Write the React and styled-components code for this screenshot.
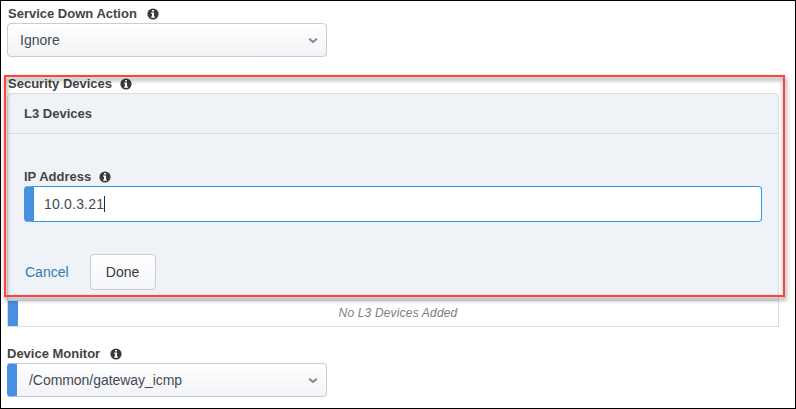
import React from "react";
import styled, { createGlobalStyle } from "styled-components";

const GlobalStyle = createGlobalStyle`
  *, *::before, *::after { box-sizing: border-box; }
  body {
    margin: 0;
    background: #fff;
    font-family: "Liberation Sans", Arial, sans-serif;
    font-size: 14px;
    color: #434a54;
  }
`;

const Page = styled.main`
  position: relative;
  width: 796px;
  height: 409px;
  padding: 4px 16px 0 6px;
  border: 1px solid #000;
  overflow: hidden;
`;

const Field = styled.section`
  display: flex;
  flex-direction: column;
  height: ${(p) => p.$height}px;
`;

const Label = styled.label`
  display: flex;
  align-items: center;
  flex: none;
  height: 18px;
  padding-left: ${(p) => p.$indent || 0}px;
  font-size: 13px;
  line-height: 18px;
  font-weight: 700;
  color: #444;
  white-space: nowrap;
`;

const LabelText = styled.span`
  width: ${(p) => p.$width}px;
`;

const IconSvg = styled.svg`
  flex: none;
  width: 12px;
  height: 12px;
  margin: 0 0 1px 9px;
`;

const Select = styled.div`
  display: flex;
  align-items: center;
  justify-content: space-between;
  width: 320px;
  height: 34px;
  padding: 0 8px 0 12px;
  border: 1px solid #c9cbd6;
  border-radius: 4px;
  background: linear-gradient(#fff, #f2f3f6);
  ${(p) => p.$required && "border-left: 10px solid #4a90e2; letter-spacing: -0.05px;"}
`;

const Chevron = styled.svg`
  width: 10px;
  height: 7px;
`;

const Panel = styled.div`
  width: 772px;
  height: 208px;
  border: 1px solid #d9dde2;
  border-radius: 4px 4px 0 0;
  background: #eff3f8;
`;

const PanelHeader = styled.header`
  height: 40px;
  padding-left: 16px;
  border-bottom: 1px solid #d9dde2;
  font-size: 13px;
  line-height: 39px;
  font-weight: 700;
  color: #444;
`;

const PanelBody = styled.div`
  padding: 34px 16px 0;
`;

const TextInput = styled.div`
  display: flex;
  align-items: center;
  height: 36px;
  padding-left: 10px;
  border: 1px solid #2b9af3;
  border-left: 10px solid #4a90e2;
  border-radius: 4px;
  background: #fff;
  letter-spacing: 0.2px;
`;

const Caret = styled.span`
  width: 1px;
  height: 16px;
  background: #1d2b40;
`;

const Actions = styled.div`
  display: flex;
  align-items: center;
  gap: 21px;
  margin-top: 32px;
`;

const CancelLink = styled.a`
  padding-left: 1px;
  color: #337ab7;
`;

const DoneButton = styled.button`
  width: 66px;
  height: 36px;
  padding: 0;
  border: 1px solid #c9cbd6;
  border-radius: 4px;
  background: linear-gradient(#fff, #f5f6f9);
  color: #343a44;
  font: inherit;
`;

const EmptyRow = styled.div`
  width: 772px;
  height: 26px;
  padding-left: 10px;
  border: 1px solid #dcdcdf;
  border-top: 0;
  background: linear-gradient(90deg, #4a90e2 10px, #fff 10px);
  font-size: 12px;
  line-height: 24px;
  font-style: italic;
  letter-spacing: 0.17px;
  text-align: center;
  color: #808080;
`;

const Highlight = styled.div`
  position: absolute;
  left: 3px;
  top: 74px;
  width: 781px;
  height: 222px;
  border: 2px solid #ff4343;
  filter: drop-shadow(1px 3px 2px rgba(0, 0, 0, 0.5));
  pointer-events: none;
`;

function InfoIcon() {
  return (
    <IconSvg viewBox="0 0 12 12">
      <circle cx="6" cy="6" r="5.6" fill="#3b3b3b" />
      <path d="M5 2h2v1.5H5zM4.1 4.6H7v3.8h.9v1.3H4.1V8.4H5V5.8h-.9z" fill="#fff" />
    </IconSvg>
  );
}

function FieldLabel({ children, indent, width }) {
  return (
    <Label $indent={indent}>
      <LabelText $width={width}>{children}</LabelText>
      <InfoIcon />
    </Label>
  );
}

function Dropdown({ value, required }) {
  return (
    <Select $required={required}>
      <span>{value}</span>
      <Chevron viewBox="0 0 10 7">
        <path d="M1.2 1.7 5 5 8.8 1.7" fill="none" stroke="#81858f" strokeWidth="2" />
      </Chevron>
    </Select>
  );
}

export default function App() {
  return (
    <>
      <GlobalStyle />
      <Page>
        <Field $height={70}>
          <FieldLabel indent={1} width={130}>Service Down Action</FieldLabel>
          <Dropdown value="Ignore" />
        </Field>
        <Field $height={270}>
          <FieldLabel indent={1} width={103}>Security Devices</FieldLabel>
          <Panel>
            <PanelHeader>L3 Devices</PanelHeader>
            <PanelBody>
              <FieldLabel width={66}>IP Address</FieldLabel>
              <TextInput>
                10.0.3.21
                <Caret />
              </TextInput>
              <Actions>
                <CancelLink>Cancel</CancelLink>
                <DoneButton>Done</DoneButton>
              </Actions>
            </PanelBody>
          </Panel>
          <EmptyRow>No L3 Devices Added</EmptyRow>
        </Field>
        <Field $height={52}>
          <FieldLabel width={94}>Device Monitor</FieldLabel>
          <Dropdown value="/Common/gateway_icmp" required />
        </Field>
        <Highlight />
      </Page>
    </>
  );
}
